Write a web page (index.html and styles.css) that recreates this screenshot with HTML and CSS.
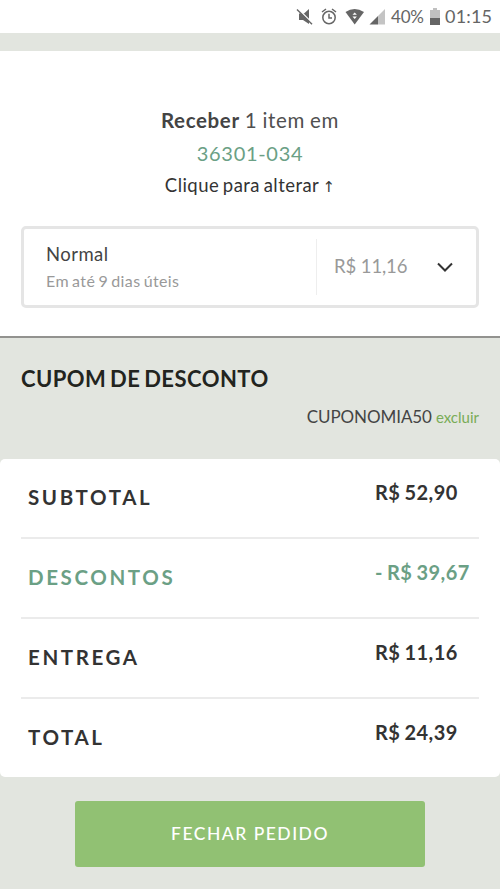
FILE: index.html
```html
<!DOCTYPE html>
<html lang="pt-BR">
<head>
<meta charset="utf-8">
<meta name="viewport" content="width=device-width">
<title>Fechar pedido</title>
<link rel="stylesheet" href="styles.css">
</head>
<body>
<header class="status">
  <svg class="status-icons" width="90" height="33" viewBox="0 0 90 33">
    <g fill="#656565">
      <path d="M3 13.500v6.500h4l6 4V9l-5 4.500z"/>
      <path d="M1.500 8.200L17 23.700" stroke="#fff" stroke-width="1.500"/>
      <path d="M1 9.500L16 24.200" stroke="#656565" stroke-width="1.400"/>
      <path d="M49.500 12Q58.500 6 68 12L58.700 24.500z"/>
      <path d="M73.500 24.500L82 16v8.500z"/>
      <path d="M82 16L89 9v15.500h-7z" fill="#c4c4c4"/>
    </g>
    <path d="M56.500 14.800l2.200-2.400 2.200 2.400zM56.500 16.500l2.200 2.400 2.200-2.400z" fill="#fff"/>
    <g fill="none" stroke="#656565" stroke-width="1.500">
      <circle cx="33" cy="17.500" r="6.200"/>
      <path d="M33 13.700v4.300h3M26 12l4-3M36 9l4 3"/>
    </g>
  </svg>
  <span class="percent">40%</span>
  <svg class="battery" width="10" height="33" viewBox="0 0 10 33">
    <path d="M0 10h3V8h4v2h3v8H0z" fill="#c0c0c0"/>
    <path d="M0 18h10v7H0z" fill="#656565"/>
  </svg>
  <span class="clock">01:15</span>
</header>
<main>
  <section class="delivery">
    <p class="receive"><b>Receber</b> 1 item em</p>
    <p class="zip">36301-034</p>
    <p class="change">Clique para alterar <span class="arrow">↑</span></p>
    <div class="option">
      <div class="option-info">
        <div class="option-name">Normal</div>
        <div class="option-time">Em até 9 dias úteis</div>
      </div>
      <div class="option-price"><span>R$ 11,16</span></div>
      <svg class="chevron" width="16" height="10" viewBox="0 0 16 10"><path d="M1 1.500l7 7 7-7" fill="none" stroke="#333" stroke-width="2"/></svg>
    </div>
  </section>
  <section class="coupon">
    <h2>CUPOM DE DESCONTO</h2>
    <p class="code"><span class="code-name">CUPONOMIA50</span><a class="remove">excluir</a></p>
  </section>
  <section class="totals">
    <div class="row"><span class="label">SUBTOTAL</span><span class="value">R$ 52,90</span></div>
    <div class="row discount"><span class="label">DESCONTOS</span><span class="value">- R$ 39,67</span></div>
    <div class="row"><span class="label">ENTREGA</span><span class="value">R$ 11,16</span></div>
    <div class="row"><span class="label">TOTAL</span><span class="value">R$ 24,39</span></div>
  </section>
  <button class="checkout">FECHAR PEDIDO</button>
</main>
</body>
</html>
```
FILE: styles.css
```css
* { box-sizing: border-box; }
body {
  margin: 0;
  height: 889px;
  overflow: hidden;
  background: #e2e5df;
  font-family: Lato, "Liberation Sans", sans-serif;
  color: #333;
}
p, h2 { margin: 0; }
.status {
  display: flex;
  align-items: center;
  height: 33px;
  padding-left: 296px;
  background: #fff;
  color: #656565;
  white-space: nowrap;
}
.percent { width: 34px; margin-left: 5px; font-size: 17px; line-height: 37px; letter-spacing: -0.2px; }
.battery { margin-left: 5px; }
.clock { margin-left: 5px; font-size: 18px; line-height: 37px; letter-spacing: 0.2px; }
.delivery {
  height: 287px;
  margin-top: 18px;
  padding: 53px 21px 0;
  background: #fff;
  border-bottom: 2px solid #92928f;
  text-align: center;
}
.receive { height: 33px; font-size: 20.500px; line-height: 32px; color: #505050; letter-spacing: 0.650px; word-spacing: -0.800px; }
.receive b { color: #444; }
.zip { height: 33px; font-size: 20px; line-height: 32px; color: #6ba085; letter-spacing: 0.700px; }
.change { height: 30px; font-size: 18.500px; line-height: 31px; letter-spacing: 0.450px; word-spacing: -1.500px; }
.arrow { font-family: "DejaVu Sans", sans-serif; font-size: 15px; letter-spacing: 0; }
.option {
  display: flex;
  align-items: center;
  height: 82px;
  margin-top: 26px;
  border: 3px solid #e5e5e5;
  border-radius: 5px;
  text-align: left;
}
.option-info { width: 292px; padding-left: 22px; }
.option-name { font-size: 18.500px; line-height: 28px; color: #444; letter-spacing: 0.450px; }
.option-time { font-size: 16px; line-height: 26px; color: #999; letter-spacing: 0.380px; word-spacing: -1.300px; }
.option-price {
  width: 121px;
  height: 56px;
  padding-left: 17px;
  border-left: 1px solid #eee;
  font-size: 18.500px;
  line-height: 54px;
  letter-spacing: -0.100px;
  color: #999;
}
.coupon { height: 121px; padding: 26px 21px 0; }
.coupon h2 { font-size: 22px; line-height: 30px; font-weight: 700; color: #222420; letter-spacing: 0.450px; word-spacing: -2px; }
.code {
  display: flex;
  justify-content: flex-end;
  align-items: baseline;
  gap: 4px;
  margin-top: 8px;
  line-height: 30px;
}
.code-name { font-size: 17px; color: #444; letter-spacing: -0.080px; }
.remove { font-size: 15px; color: #79ac57; }
.totals { height: 318px; padding: 0 21px; background: #fff; border-radius: 5px; }
.row {
  display: flex;
  height: 80px;
  padding-left: 7px;
  border-bottom: 2px solid #ebebeb;
  font-weight: 700;
}
.row:last-child { height: 78px; border: 0; }
.label { width: 347px; font-size: 20.500px; line-height: 76px; letter-spacing: 2.600px; }
.value { font-size: 20px; line-height: 66px; white-space: nowrap; letter-spacing: 0.450px; word-spacing: -1.200px; }
.discount { color: #6ba085; }
.checkout {
  display: block;
  width: 350px;
  height: 66px;
  margin: 24px auto 0;
  padding: 0;
  border: 0;
  border-radius: 3px;
  background: #91c173;
  color: #fff;
  font: 500 17.500px/64px Lato, sans-serif;
  letter-spacing: 1.500px;
}
```
